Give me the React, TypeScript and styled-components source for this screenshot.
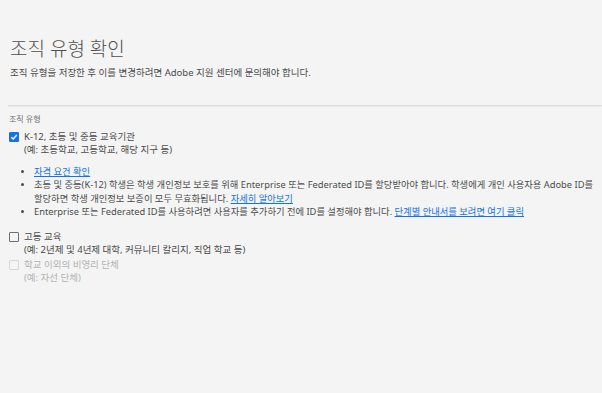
import styled, { createGlobalStyle } from "styled-components";

const GlobalStyle = createGlobalStyle`
	html, body {
		margin: 0;
		padding: 0;
		background: #f4f4f4;
	}
	body {
		font-family: "Noto Sans", "Noto Sans CJK KR", sans-serif;
		color: #4b4b4b;
		word-break: keep-all;
	}
`;

type Option = {
	label: string;
	desc: string;
	checked?: boolean;
	disabled?: boolean;
};

const options: Option[] = [
	{ label: "고등 교육", desc: "(예: 2년제 및 4년제 대학, 커뮤니티 칼리지, 직업 학교 등)" },
	{ label: "학교 이외의 비영리 단체", desc: "(예: 자선 단체)", disabled: true },
];

const CheckIcon = () => (
	<svg viewBox="0 0 10 10" width="8" height="8">
		<path d="M1.6 5.2 L4 7.5 L8.5 2.5" fill="none" stroke="#fff" strokeWidth="1.7" />
	</svg>
);

const OrgTypeItem = ({ label, desc, checked, disabled, children }: Option & { children?: React.ReactNode }) => (
	<Item>
		<Box $checked={checked} $disabled={disabled}>{checked && <CheckIcon />}</Box>
		<ItemBody $disabled={disabled}>
			<Label>{label}</Label>
			<Desc>{desc}</Desc>
			{children}
		</ItemBody>
	</Item>
);

const App = () => {
	return (
		<>
			<GlobalStyle />
			<Page>
				<Header>
					<Title>조직 유형 확인</Title>
					<Subtitle>조직 유형을 저장한 후 이를 변경하려면 Adobe 지원 센터에 문의해야 합니다.</Subtitle>
				</Header>
				<Divider />
				<Section>
					<SectionLabel>조직 유형</SectionLabel>
					<OrgTypeItem label="K-12, 초등 및 중등 교육기관" desc="(예: 초등학교, 고등학교, 해당 지구 등)" checked>
						<Notes>
							<li>
								<Link>자격 요건 확인</Link>
							</li>
							<li>
								초등 및 중등(K-12) 학생은 학생 개인정보 보호를 위해 Enterprise 또는 Federated ID를 할당받아야 합니다. 학생에게 개인 사용자용 Adobe ID를 할당하면 학생 개인정보 보증이 모두 무효화됩니다. <Link>자세히 알아보기</Link>
							</li>
							<li>
								Enterprise 또는 Federated ID를 사용하려면 사용자를 추가하기 전에 ID를 설정해야 합니다. <Link>단계별 안내서를 보려면 여기 클릭</Link>
							</li>
						</Notes>
					</OrgTypeItem>
					{options.map((o) => (
						<OrgTypeItem key={o.label} {...o} />
					))}
				</Section>
			</Page>
		</>
	);
};

export default App;

const Page = styled.div`
	width: 602px;
	height: 393px;
	padding-top: 37px;
	box-sizing: border-box;
`;

const Header = styled.div`
	padding: 0 10px;
`;

const Title = styled.h1`
	margin: 0;
	font-size: 19px;
	font-weight: 300;
	line-height: 25px;
	color: #4f4f4f;
`;

const Subtitle = styled.p`
	margin: 4px 0 0;
	font-size: 9.5px;
	line-height: 13px;
	color: #4b4b4b;
`;

const Divider = styled.div`
	margin: 26px 0 0 8px;
	height: 1px;
	background: #dedede;
	box-shadow: 0 1px 1px rgba(0, 0, 0, 0.04);
`;

const Section = styled.div`
	padding: 8px 4px 0 9px;
`;

const SectionLabel = styled.div`
	font-size: 8px;
	line-height: 10px;
	color: #6e6e6e;
	margin-bottom: 6px;
`;

const Item = styled.div`
	display: flex;
	gap: 5px;
	margin-bottom: 2px;
`;

const Box = styled.div<{ $checked?: boolean; $disabled?: boolean }>`
	flex: none;
	width: 10px;
	height: 10px;
	margin-top: 1.5px;
	box-sizing: border-box;
	border-radius: 1px;
	border: 1px solid ${(p) => (p.$checked ? "#1473e6" : p.$disabled ? "#d6d6d6" : "#6e6e6e")};
	background: ${(p) => (p.$checked ? "#1473e6" : "transparent")};
	display: flex;
	align-items: center;
	justify-content: center;
`;

const ItemBody = styled.div<{ $disabled?: boolean }>`
	color: ${(p) => (p.$disabled ? "#b3b3b3" : "#4b4b4b")};
	font-size: 9.5px;
	line-height: 13px;
`;

const Label = styled.div``;

const Desc = styled.div``;

const Notes = styled.ul`
	margin: 9px 0 10px;
	padding-left: 10px;
	list-style: disc;

	li {
		font-size: 9.3px;
		line-height: 13.33px;
	}
	li::marker {
		font-size: 8px;
	}
`;

const Link = styled.a`
	color: #1473e6;
	text-decoration: underline;
	cursor: pointer;
`;
